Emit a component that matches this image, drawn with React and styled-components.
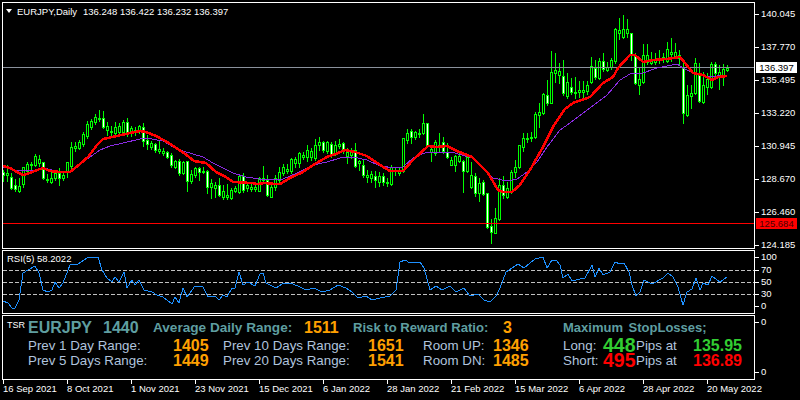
import React from 'react'
import styled, { createGlobalStyle } from 'styled-components'

const GlobalStyle = createGlobalStyle`
  html, body {
    margin: 0;
    padding: 0;
    background: #000;
    overflow: hidden;
  }
  body {
    font-family: "Liberation Sans", Arial, sans-serif;
  }
`

const Page = styled.div`
  width: 800px;
  height: 400px;
  padding: 2px 0 0 2px;
  box-sizing: border-box;
  display: flex;
  flex-direction: column;
  gap: 1px;
  background: #000;
  color: #fff;
`

const Row = styled.div`
  display: flex;
  height: ${(p) => p.$h}px;
`

const Panel = styled.div`
  position: relative;
  width: 753px;
  box-sizing: border-box;
  border: 1px solid #fff;
  background: #000;
`

const ChartSvg = styled.svg`
  display: block;
  shape-rendering: crispEdges;
`

const Legend = styled.div`
  position: absolute;
  left: 3px;
  top: 2px;
  display: flex;
  align-items: center;
  height: 12px;
  font-size: 9.5px;
  white-space: pre;
`

const Triangle = styled.span`
  width: 0;
  height: 0;
  margin-right: 5px;
  border-left: 3.5px solid transparent;
  border-right: 3.5px solid transparent;
  border-top: 4px solid #fff;
`

const PriceBlock = styled.span`
  margin-left: 6px;
`

const RsiTag = styled.div`
  position: absolute;
  left: 4px;
  top: 2px;
  font-size: 9.5px;
  line-height: 12px;
`

const Axis = styled.div`
  position: relative;
  flex: 1;
  display: flex;
  flex-direction: column;
  gap: ${(p) => p.$gap || 0}px;
  padding-top: ${(p) => p.$top || 0}px;
  font-size: 9.5px;
`

const AxisLabel = styled.div`
  display: flex;
  align-items: center;
  flex: none;
  height: 12px;
  line-height: 12px;
  &::before {
    content: '';
    width: 4px;
    height: 1px;
    margin-right: 2px;
    background: #fff;
  }
  ${(p) => p.$first && 'margin-bottom: 1px;'}
`

const PriceTag = styled.div`
  position: absolute;
  left: 1px;
  top: ${(p) => p.$y}px;
  width: 41px;
  height: 11px;
  line-height: 11px;
  text-align: center;
  color: ${(p) => p.$fg};
  background: ${(p) => p.$bg};
`

const TsrPanel = styled(Panel)`
  display: flex;
  flex-direction: column;
  padding: 2px 0 0 4px;
`

const TsrHead = styled.div`
  display: grid;
  grid-template-columns: 21px 75px 50px 151px 49px 150px 60px auto;
  align-items: center;
  height: 18px;
  margin-bottom: 2px;
`

const TsrRow = styled.div`
  display: grid;
  grid-template-columns: 145px 50px 145px 55px 70px 70px 40px 33px 57px auto;
  align-items: center;
  height: 15px;
  margin-left: 21px;
`

const Small = styled.span`
  font-size: 9px;
  margin-top: -4px;
`

const Big = styled.span`
  font-size: ${(p) => p.$size || 16}px;
  font-weight: bold;
  color: ${(p) => p.$color || '#ffa000'};
  line-height: 15px;
  white-space: nowrap;
`

const StopHead = styled(Big)`
  word-spacing: 2px;
`

const Note = styled.span`
  font-size: 13.33px;
  color: #b0c4de;
  white-space: nowrap;
  line-height: 15px;
`

const TimeAxis = styled.div`
  display: flex;
  margin: -1px 0 0 1px;
`

const TimeCell = styled.div`
  position: relative;
  flex: none;
  width: 64px;
  padding-top: 3px;
  font-size: 9.5px;
  line-height: 12px;
  white-space: nowrap;
  &::before {
    content: '';
    position: absolute;
    left: 0;
    top: 0;
    width: 1px;
    height: 4px;
    background: #fff;
  }
`

// wick top, body top, body bottom, wick bottom, white body (page pixels); x = 3 + 4 * index
const candles = [
  [170,172,175,181,1],[165,173,175,181],[173,177,188,189,1],[179,185,189,191,1],[178,186,191,192],[167,167,184,187],
  [162,164,171,173],[162,164,165,170],[154,156,165,166],[155,159,163,166],[162,162,178,179,1],[174,179,180,182],
  [170,178,182,183],[170,173,178,180],[168,173,178,185,1],[172,175,178,180],[162,162,171,177],[142,147,166,168],
  [142,146,148,151],[140,142,148,149],[132,134,144,146],[121,124,136,138],[119,121,127,129],[114,117,122,124],
  [110,118,119,121],[111,118,127,128,1],[122,126,130,135],[126,131,132,137],[122,127,133,137],[123,126,132,135],
  [120,122,132,135],[118,122,132,136,1],[126,128,131,136],[127,130,131,135],[125,126,130,133],[123,127,141,146,1],
  [135,140,144,149,1],[141,143,147,149],[143,144,150,152,1],[141,149,151,153],[148,151,153,155],[151,152,157,158,1],
  [153,155,165,167,1],[160,161,167,168],[159,161,173,175,1],[161,162,173,174],[161,161,181,191,1],[170,174,181,183],
  [167,168,175,177],[167,168,172,180,1],[167,171,172,173],[170,171,187,193,1],[179,183,187,198],[182,185,188,197],
  [178,185,195,196,1],[185,191,197,199],[184,195,197,199],[188,190,198,199],[186,188,191,192],[175,176,192,193],
  [173,176,190,192,1],[182,185,188,191],[182,187,189,191],[183,187,189,191],[177,178,191,191],[166,178,180,183],
  [175,180,195,196,1],[183,187,197,197],[175,178,187,190],[167,172,180,182],[164,167,173,175],[164,169,171,173],
  [158,159,171,173],[157,159,163,167],[152,153,163,167],[152,155,157,159],[145,150,157,161],[148,151,157,160],
  [139,145,158,160],[137,142,145,150],[141,142,150,152,1],[141,142,151,153],[142,144,154,157,1],[141,145,153,155],
  [139,144,146,148],[142,143,150,153,1],[148,152,156,163],[148,150,155,158],[143,150,166,167,1],[160,161,163,170],
  [160,165,175,177,1],[170,175,177,182],[171,174,178,182],[171,176,180,187,1],[172,176,182,186],[173,176,182,185,1],
  [178,182,183,186],[165,167,184,185],[167,170,171,175],[167,170,173,175],[138,138,171,172],[129,133,140,143],
  [129,131,137,143,1],[131,132,137,139],[129,133,134,137],[114,123,133,134],[123,123,146,147,1],[146,149,152,161],
  [140,142,153,155],[133,145,146,152],[137,142,151,153,1],[143,152,157,158,1],[157,160,165,165],[155,156,165,171],
  [152,156,161,162],[160,161,171,192,1],[157,157,171,172],[162,175,187,188],[173,176,193,196,1],[178,183,193,201],
  [180,182,194,195,1],[193,193,227,228,1],[219,226,232,243,1],[208,218,233,233],[178,185,219,220],[176,185,195,198,1],
  [182,188,197,198],[170,172,191,193],[160,167,172,177],[145,145,167,168],[133,138,147,151],[133,138,139,142],
  [132,137,138,141],[112,114,137,138],[103,112,115,127],[93,94,113,114],[80,95,103,105,1],[51,72,103,103],
  [53,70,73,82],[63,71,75,83],[60,76,93,95,1],[73,82,96,98],[78,87,92,94,1],[77,92,93,98],
  [81,90,92,97],[81,90,92,97],[81,85,91,94],[57,66,82,83],[60,68,77,79,1],[58,61,78,79],
  [53,61,69,71,1],[62,67,70,71],[58,60,67,69],[28,29,61,63],[18,30,33,39],[15,29,37,38],
  [19,29,33,37],[33,33,55,60,1],[53,55,83,84,1],[68,79,85,94],[44,55,82,83],[44,55,62,64],
  [52,59,63,64],[53,59,62,64],[50,59,60,63],[53,57,59,62],[42,49,61,62],[38,52,54,61],
  [43,52,57,58],[50,55,58,64],[63,68,113,123,1],[85,95,115,116],[85,93,96,108],[58,63,93,94],
  [63,74,101,102,1],[72,85,102,103],[73,79,87,94],[62,64,87,88],[62,64,73,75,1],[65,72,75,89],
  [64,69,75,85],[65,68,70,71],
]

const redLine = '3,166 10,168 17,172 23,175 30,173 37,170 43,168 50,171 60,172 70,172 80,164 88,157 97,145 103,139 117,136 130,133 140,131 146,132 156,136 169,143 179,150 184,153 194,161 206,163 216,172 226,177 233,182 251,183 258,184 264,183 276,184 280,184 290,178 303,172 313,165 327,157 338,153 345,150 355,152 367,156 380,165 390,171 403,171 413,160 428,146 437,147 447,146 457,151 472,157 480,165 488,173 498,190 503,192 512,192 520,185 530,170 543,147 553,127 565,109 573,103 590,97 603,83 613,77 618,68 630,55 635,55 643,62 653,60 667,59 680,57 685,63 693,73 703,75 712,80 718,77 727,76'
const purpleLine = '3,167 15,170 33,171 43,168 57,171 70,172 80,164 90,157 100,150 110,146 123,143 140,139 146,138 163,141 173,147 183,151 193,154 203,157 213,163 223,168 233,173 246,177 259,179 276,180 283,179 297,173 313,165 327,162 340,158 353,157 367,160 380,166 395,168 403,167 413,158 427,152 443,152 455,153 472,158 483,167 493,178 507,181 517,179 527,172 537,162 547,147 560,130 570,123 590,108 607,95 620,80 630,74 643,73 657,68 677,64 683,68 693,73 703,76 717,76 727,75'
const rsiLine = '3,301 8,303 12,308 15,308 19,300 23,273 28,270 35,266 39,273 43,290 48,292 52,290 55,282 59,288 63,283 70,265 78,264 87,258 98,257 102,270 107,278 112,282 115,277 119,282 124,272 127,288 132,280 135,285 139,280 144,290 152,292 157,295 163,297 172,304 175,297 179,303 183,288 187,297 195,286 203,287 208,297 215,296 219,300 223,295 227,297 232,288 235,288 239,272 243,285 248,282 255,286 260,274 263,273 266,283 270,285 276,288 282,284 290,283 298,286 306,290 314,288 322,292 330,290 338,285 346,288 352,292 358,298 366,296 372,300 380,298 390,296 396,290 400,262 405,260 410,263 416,262 420,262 424,268 430,290 436,286 442,290 450,286 456,292 464,288 470,296 478,294 484,300 490,302 496,296 500,288 506,272 512,268 518,264 524,268 530,263 535,259 543,257 547,268 552,260 557,261 560,265 563,278 568,274 572,281 580,279 585,278 592,265 595,277 599,268 603,275 610,272 615,262 620,264 624,263 629,272 632,285 636,296 640,292 644,280 652,284 663,278 668,273 673,277 678,287 683,305 687,292 692,289 696,278 700,290 703,283 708,285 712,276 720,282 727,277'

const priceLabels = ['140.045', '137.770', '135.495', '133.220', '130.945', '128.670', '126.460', '124.185']
const rsiLabels = ['100', '70', '50', '30', '0']
const dates = ['16 Sep 2021', '8 Oct 2021', '1 Nov 2021', '23 Nov 2021', '15 Dec 2021', '6 Jan 2022', '28 Jan 2022', '21 Feb 2022', '15 Mar 2022', '6 Apr 2022', '28 Apr 2022', '20 May 2022']

function Candle({ data, index }) {
  const [high, top, bottom, low, white] = data
  const x = 3 + index * 4
  const h = bottom - top + 1
  return (
    <g>
      <rect x={x} y={high} width="1" height={low - high + 1} fill="#00ff00" />
      <rect x={x - 1} y={top} width="3" height={h} fill="#00ff00" />
      {h > 2 && <rect x={x} y={top + 1} width="1" height={h - 2} fill={white ? '#fff' : '#000'} />}
    </g>
  )
}

function PriceChart() {
  return (
    <ChartSvg width="751" height="245" viewBox="3 3 751 245">
      {candles.map((c, i) => <Candle key={i} data={c} index={i} />)}
      <line x1="3" x2="754" y1="67.5" y2="67.5" stroke="#8a919c" />
      <line x1="3" x2="754" y1="223.5" y2="223.5" stroke="#ff0000" />
      <polyline points={purpleLine} fill="none" stroke="#8a2be2" strokeWidth="1" />
      <polyline points={redLine} fill="none" stroke="#ff0000" strokeWidth="2.5" />
    </ChartSvg>
  )
}

function RsiChart() {
  return (
    <ChartSvg width="751" height="62" viewBox="3 251 751 62">
      {[270.5, 282.5, 294.5].map((y) => (
        <line key={y} x1="3" x2="754" y1={y} y2={y} stroke="#c0c0c0" strokeDasharray="4 2" />
      ))}
      <polyline points={rsiLine} fill="none" stroke="#1e90ff" strokeWidth="1" />
    </ChartSvg>
  )
}

export default function App() {
  return (
    <Page>
      <GlobalStyle />
      <Row $h={247}>
        <Panel>
          <PriceChart />
          <Legend>
            <Triangle />
            EURJPY,Daily
            <PriceBlock>136.248 136.422 136.232 136.397</PriceBlock>
          </Legend>
        </Panel>
        <Axis $top={6} $gap={21}>
          {priceLabels.map((p) => <AxisLabel key={p}>{p}</AxisLabel>)}
          <PriceTag $y={60} $bg="#fff" $fg="#000">136.397</PriceTag>
          <PriceTag $y={216} $bg="#ff0000" $fg="#4a0000">125.684</PriceTag>
        </Axis>
      </Row>
      <Row $h={64}>
        <Panel>
          <RsiChart />
          <RsiTag>RSI(5) 58.2022</RsiTag>
        </Panel>
        <Axis $top={1}>
          {rsiLabels.map((l, i) => <AxisLabel key={l} $first={i === 0}>{l}</AxisLabel>)}
        </Axis>
      </Row>
      <Row $h={65}>
        <TsrPanel>
          <TsrHead>
            <Small>TSR</Small>
            <Big $color="#5f9ea0">EURJPY</Big>
            <Big $color="#5f9ea0">1440</Big>
            <Big $size={13.6} $color="#5f9ea0">Average Daily Range:</Big>
            <Big>1511</Big>
            <Big $size={13.1} $color="#5f9ea0">Risk to Reward Ratio:</Big>
            <Big>3</Big>
            <StopHead $size={13} $color="#5f9ea0">Maximum StopLosses;</StopHead>
          </TsrHead>
          <TsrRow>
            <Note>Prev 1 Day Range:</Note>
            <Big>1405</Big>
            <Note>Prev 10 Days Range:</Note>
            <Big>1651</Big>
            <Note>Room UP:</Note>
            <Big>1346</Big>
            <Note>Long:</Note>
            <Big $size={19.5} $color="#32cd32">448</Big>
            <Note>Pips at</Note>
            <Big $color="#32cd32">135.95</Big>
          </TsrRow>
          <TsrRow>
            <Note>Prev 5 Days Range:</Note>
            <Big>1449</Big>
            <Note>Prev 20 Days Range:</Note>
            <Big>1541</Big>
            <Note>Room DN:</Note>
            <Big>1485</Big>
            <Note>Short:</Note>
            <Big $size={19.5} $color="#ff0000">495</Big>
            <Note>Pips at</Note>
            <Big $color="#ff0000">136.89</Big>
          </TsrRow>
        </TsrPanel>
        <Axis $top={1} $gap={38}>
          <AxisLabel>0</AxisLabel>
          <AxisLabel>0</AxisLabel>
        </Axis>
      </Row>
      <TimeAxis>
        {dates.map((d) => <TimeCell key={d}>{d}</TimeCell>)}
      </TimeAxis>
    </Page>
  )
}
